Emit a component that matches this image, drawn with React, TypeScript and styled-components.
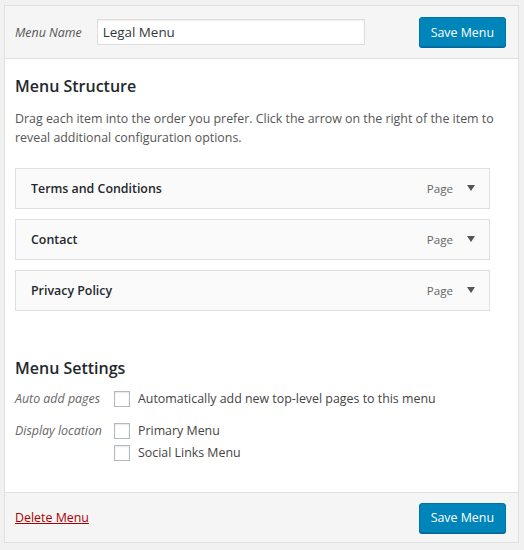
import React from 'react'
import styled, { createGlobalStyle } from 'styled-components'

const GlobalStyle = createGlobalStyle`
  html, body {
    margin: 0;
    padding: 0;
    background: #f1f1f1;
  }
  body {
    font-family: "Open Sans", "Noto Sans", sans-serif;
    font-size: 12.4px;
    color: #444;
  }
`

const Frame = styled.div`
  margin: 5px 5px 8px 4px;
  border: 1px solid #dfdfdf;
  background: #f5f5f5;
`

const HeaderBar = styled.div`
  display: flex;
  align-items: center;
  height: 52px;
  padding: 0 10px;
`

const FooterBar = styled(HeaderBar)`
  height: 49px;
  justify-content: space-between;
`

const FieldLabel = styled.label`
  font-style: italic;
  color: #555;
  font-size: 12.4px;
  margin-right: 15px;
`

const NameInput = styled.input`
  width: 268px;
  height: 26px;
  box-sizing: border-box;
  border: 1px solid #ddd;
  box-shadow: inset 0 1px 2px rgba(0, 0, 0, 0.07);
  background: #fff;
  font-family: inherit;
  font-size: 13.4px;
  color: #32373c;
  padding: 0 5px;
  margin-right: auto;
  outline: none;
`

const PrimaryButton = styled.button`
  height: 30px;
  padding: 0 11px;
  background: #0085ba;
  border: 1px solid #0073aa;
  border-radius: 3px;
  box-shadow: 0 1px 0 #006799;
  color: #fff;
  font-family: inherit;
  font-size: 12.4px;
  margin-right: 2px;
  cursor: pointer;
`

const Body = styled.div`
  background: #fff;
  border-top: 1px solid #dfdfdf;
  border-bottom: 1px solid #dfdfdf;
  padding: 9px 10px 17px;
`

const Heading = styled.h3<{ $gap?: number }>`
  margin: 7px 0 ${p => p.$gap ?? 12}px;
  font-size: 16px;
  font-weight: 600;
  color: #23282d;
`

const Hint = styled.p`
  margin: 0 0 21px;
  line-height: 19px;
  color: #555;
`

const ItemList = styled.ul`
  list-style: none;
  margin: 0 0 46px;
  padding: 0;
  width: 475px;
  display: flex;
  flex-direction: column;
  gap: 10px;
`

const Item = styled.li`
  display: flex;
  align-items: center;
  height: 41px;
  box-sizing: border-box;
  border: 1px solid #dfdfdf;
  background: #fafafa;
  padding: 0 14px 0 15px;
`

const ItemTitle = styled.span`
  font-weight: 600;
  color: #23282d;
  margin-right: auto;
`

const ItemType = styled.span`
  color: #666;
  font-size: 11.6px;
  margin-right: 14px;
`

const Arrow = styled.span`
  width: 0;
  height: 0;
  border-left: 4px solid transparent;
  border-right: 4px solid transparent;
  border-top: 6px solid #555;
  margin-top: -2px;
`

const SettingRow = styled.div`
  display: flex;
  align-items: flex-start;
  margin-bottom: 13px;
`

const SettingLabel = styled.span`
  width: 99px;
  font-style: italic;
  color: #666;
  line-height: 19px;
`

const Options = styled.div`
  display: flex;
  flex-direction: column;
  gap: 3px;
`

const Option = styled.label`
  display: flex;
  align-items: center;
  line-height: 19px;
  color: #444;
`

const Box = styled.span`
  width: 16px;
  height: 16px;
  box-sizing: border-box;
  border: 1px solid #b4b9be;
  background: #fff;
  box-shadow: inset 0 1px 2px rgba(0, 0, 0, 0.1);
  margin-right: 8px;
`

const DeleteLink = styled.a`
  color: #a00;
  text-decoration: underline;
  font-size: 12.4px;
  cursor: pointer;
`

const items = ['Terms and Conditions', 'Contact', 'Privacy Policy']

export default function App() {
  return (
    <>
      <GlobalStyle />
      <Frame>
        <HeaderBar>
          <FieldLabel htmlFor="menu-name">Menu Name</FieldLabel>
          <NameInput id="menu-name" defaultValue="Legal Menu" />
          <PrimaryButton>Save Menu</PrimaryButton>
        </HeaderBar>
        <Body>
          <Heading>Menu Structure</Heading>
          <Hint>
            Drag each item into the order you prefer. Click the arrow on the right of the item to
            reveal additional configuration options.
          </Hint>
          <ItemList>
            {items.map(title => (
              <Item key={title}>
                <ItemTitle>{title}</ItemTitle>
                <ItemType>Page</ItemType>
                <Arrow />
              </Item>
            ))}
          </ItemList>
          <Heading $gap={10}>Menu Settings</Heading>
          <SettingRow>
            <SettingLabel>Auto add pages</SettingLabel>
            <Options>
              <Option><Box />Automatically add new top-level pages to this menu</Option>
            </Options>
          </SettingRow>
          <SettingRow>
            <SettingLabel>Display location</SettingLabel>
            <Options>
              <Option><Box />Primary Menu</Option>
              <Option><Box />Social Links Menu</Option>
            </Options>
          </SettingRow>
        </Body>
        <FooterBar>
          <DeleteLink>Delete Menu</DeleteLink>
          <PrimaryButton>Save Menu</PrimaryButton>
        </FooterBar>
      </Frame>
    </>
  )
}
